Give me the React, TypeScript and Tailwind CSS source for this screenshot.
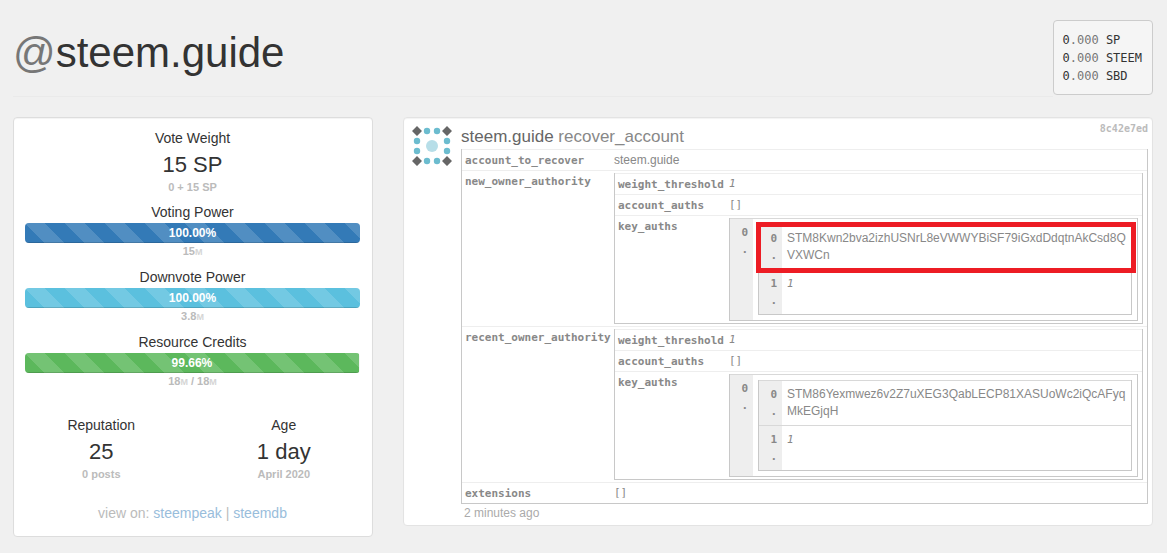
import { type ReactNode } from "react";
import clsx from "clsx";

const balances = [
  { whole: "0", fraction: ".000", unit: "SP" },
  { whole: "0", fraction: ".000", unit: "STEEM" },
  { whole: "0", fraction: ".000", unit: "SBD" },
];

const meters = [
  { label: "Voting Power", percent: 100, color: "bg-[#337ab7]", amounts: ["15"] },
  { label: "Downvote Power", percent: 100, color: "bg-[#5bc0de]", amounts: ["3.8"] },
  { label: "Resource Credits", percent: 99.66, color: "bg-[#5cb85c]", amounts: ["18", "18"] },
];

const authorities = [
  {
    name: "new_owner_authority",
    publicKey: "STM8Kwn2bva2izhUSNrL8eVWWYBiSF79iGxdDdqtnAkCsd8QVXWCn",
    highlighted: true,
  },
  {
    name: "recent_owner_authority",
    publicKey: "STM86Yexmwez6v2Z7uXEG3QabLECP81XASUoWc2iQcAFyqMkEGjqH",
    highlighted: false,
  },
];

function Stat({ label, value, note }: { label: string; value: string; note: string }) {
  return (
    <div className="text-center">
      <div className="text-sm leading-5">{label}</div>
      <div className="mt-0.5 text-[22px] leading-[30px]">{value}</div>
      <div className="text-[11px] font-bold leading-[15px] text-[#bbb]">{note}</div>
    </div>
  );
}

function Meter({ label, percent, color, amounts }: (typeof meters)[number]) {
  return (
    <div className="mb-[7px] text-center">
      <div className="mb-px text-sm leading-5">{label}</div>
      <div
        role="progressbar"
        aria-label={label}
        aria-valuenow={percent}
        className="h-5 overflow-hidden rounded bg-[#f5f5f5]"
      >
        <div
          className={clsx(
            "h-full bg-[linear-gradient(45deg,rgba(255,255,255,.15)_25%,transparent_25%,transparent_50%,rgba(255,255,255,.15)_50%,rgba(255,255,255,.15)_75%,transparent_75%,transparent)] bg-[length:40px_40px] text-xs font-bold leading-5 text-white shadow-[inset_0_-1px_0_rgba(0,0,0,.15)]",
            color,
          )}
          style={{ width: `${percent}%` }}
        >
          {percent.toFixed(2)}%
        </div>
      </div>
      <div className="text-[11px] font-bold leading-4 text-[#bbb]">
        {amounts.map((amount, i) => (
          <span key={i}>
            {i > 0 && " / "}
            {amount}
            <span className="text-[9px] text-[#d5d5d5]">M</span>
          </span>
        ))}
      </div>
    </div>
  );
}

function FieldTable({ keyWidth, children }: { keyWidth: string; children: ReactNode }) {
  return (
    <table className="w-full table-fixed border-separate border-spacing-0 border-x border-b border-[#c8c8c8]">
      <colgroup>
        <col className={keyWidth} />
        <col />
      </colgroup>
      <tbody>{children}</tbody>
    </table>
  );
}

function Field({ name, children }: { name: string; children: ReactNode }) {
  return (
    <tr>
      <th
        scope="row"
        className="whitespace-nowrap border-t border-[#eee] pb-px pl-[3px] pt-[3px] text-left align-top font-['DejaVu_Sans_Mono',monospace] text-[11px] font-bold leading-4"
      >
        {name}
      </th>
      <td className="border-t border-[#eee] py-0.5 pr-1 align-top leading-4">{children}</td>
    </tr>
  );
}

function Mono({ children, italic }: { children: ReactNode; italic?: boolean }) {
  return (
    <span className={clsx("block font-['DejaVu_Sans_Mono',monospace] text-[11px]", italic && "italic")}>
      {children}
    </span>
  );
}

function ListItem({ index, highlighted, children }: { index: number; highlighted?: boolean; children: ReactNode }) {
  return (
    <li className="relative flex border-t border-[#d8d8d8] leading-[17px]">
      <div className="w-[23px] shrink-0 bg-[#eee] py-[5px] pr-[5px] text-right font-['DejaVu_Sans_Mono',monospace] text-[11px] font-bold">
        <span className="block">{index}</span>
        <span className="block">.</span>
      </div>
      <div className="min-w-0 flex-1 break-all p-[5px]">{children}</div>
      {highlighted && (
        <div className="absolute -bottom-1 -left-[3px] -right-[5px] -top-[3px] z-10 border-[5px] border-[#ed1c24]" />
      )}
    </li>
  );
}

function Avatar() {
  return (
    <svg viewBox="0 0 40 40" className="size-10 shrink-0" aria-hidden="true">
      <g fill="#666">
        <path d="M5 0l5 5-5 5-5-5zM35 0l5 5-5 5-5-5zM5 30l5 5-5 5-5-5zM35 30l5 5-5 5-5-5z" />
      </g>
      <g fill="#6cbccf">
        <circle cx="15" cy="5" r="3.2" />
        <circle cx="25" cy="5" r="3.2" />
        <circle cx="5" cy="15" r="3.2" />
        <circle cx="5" cy="25" r="3.2" />
        <circle cx="35" cy="15" r="3.2" />
        <circle cx="35" cy="25" r="3.2" />
        <circle cx="15" cy="35" r="3.2" />
        <circle cx="25" cy="35" r="3.2" />
      </g>
      <circle cx="20" cy="20" r="6" fill="#b7dee8" />
    </svg>
  );
}

export default function App() {
  return (
    <div className="min-h-screen bg-[#f0f0f0] pb-4 pl-[13px] pr-[14px] pt-5 font-['Liberation_Sans',Arial,sans-serif] text-[#333]">
      <header className="flex items-start">
        <h1 className="flex-1 border-b border-[#eaeaea] pb-5 pt-[10px] text-[42px] leading-[46px]">
          <span className="text-[#777]">@</span>steem.guide
        </h1>
        <pre className="rounded border border-[#ccc] bg-[#f5f5f5] pb-[9px] pl-[9px] pr-[10px] pt-[10px] font-['DejaVu_Sans_Mono',monospace] text-xs leading-[18px]">
          {balances.map(({ whole, fraction, unit }) => (
            <div key={unit}>
              {whole}
              <span className="text-[#777]">{fraction}</span> {unit}
            </div>
          ))}
        </pre>
      </header>

      <main className="mt-5 grid grid-cols-[12fr_25fr] items-start gap-[30px]">
        <aside className="rounded border border-[#ddd] bg-white pb-[13px] pl-[11px] pr-3 pt-[10px] shadow-[inset_0_1px_1px_rgba(0,0,0,.05)]">
          <div className="mb-[7px]">
            <Stat label="Vote Weight" value="15 SP" note="0 + 15 SP" />
          </div>
          {meters.map((meter) => (
            <Meter key={meter.label} {...meter} />
          ))}
          <div className="-mx-[15px] mt-[25px] grid grid-cols-2">
            <Stat label="Reputation" value="25" note="0 posts" />
            <Stat label="Age" value="1 day" note="April 2020" />
          </div>
          <p className="mt-[21px] text-center text-sm leading-5 text-[#bbb]">
            view on:{" "}
            <a href="#steempeak" className="text-[#99bddb]">
              steempeak
            </a>{" "}
            |{" "}
            <a href="#steemdb" className="text-[#99bddb]">
              steemdb
            </a>
          </p>
        </aside>

        <article className="flex gap-[9px] rounded border border-[#e3e3e3] bg-white py-1 pl-2 pr-1 text-xs text-[#888] shadow-[inset_0_1px_1px_rgba(0,0,0,.05)]">
          <div className="pt-1">
            <Avatar />
          </div>
          <div className="min-w-0 flex-1">
            <div className="flex items-start justify-between">
              <h2 className="pb-px pt-[3px] text-[17px] leading-[23px]">
                <span className="text-[#666]">steem.guide</span> recover_account
              </h2>
              <span className="font-['DejaVu_Sans_Mono',monospace] text-[10px] font-bold leading-[14px] text-[#bbb]">
                8c42e7ed
              </span>
            </div>
            <FieldTable keyWidth="w-[152px]">
              <Field name="account_to_recover">steem.guide</Field>
              {authorities.map(({ name, publicKey, highlighted }) => (
                <Field key={name} name={name}>
                  <FieldTable keyWidth="w-[114px]">
                    <Field name="weight_threshold">
                      <Mono italic>1</Mono>
                    </Field>
                    <Field name="account_auths">
                      <Mono>[]</Mono>
                    </Field>
                    <Field name="key_auths">
                      <ol className="border-x border-b border-[#c8c8c8]">
                        <ListItem index={0}>
                          <ol className="border-x border-b border-[#c8c8c8]">
                            <ListItem index={0} highlighted={highlighted}>
                              {publicKey}
                            </ListItem>
                            <ListItem index={1}>
                              <Mono italic>1</Mono>
                            </ListItem>
                          </ol>
                        </ListItem>
                      </ol>
                    </Field>
                  </FieldTable>
                </Field>
              ))}
              <Field name="extensions">
                <Mono>[]</Mono>
              </Field>
            </FieldTable>
            <p className="pl-[3px] pt-0.5 leading-[15px] text-[#aaa]">2 minutes ago</p>
          </div>
        </article>
      </main>
    </div>
  );
}
